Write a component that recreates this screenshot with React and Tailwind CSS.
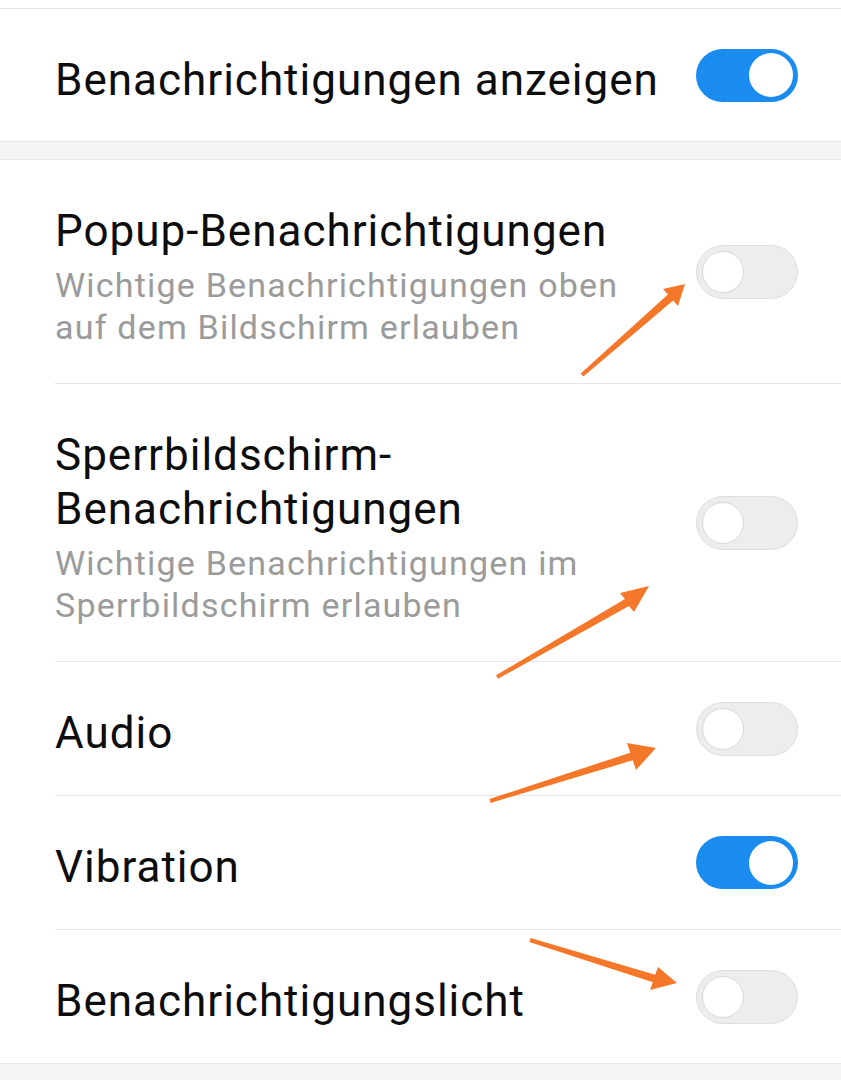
import React from 'react'

const arrows = [
  { tail: [582, 375], tip: [685, 284], wings: [[663, 289], [678, 306]] },
  { tail: [497, 677], tip: [649, 586], wings: [[620, 593], [634, 612]] },
  { tail: [490, 801], tip: [656, 748], wings: [[627, 743], [636, 770]] },
  { tail: [530, 940], tip: [677, 983], wings: [[658, 967], [650, 990]] },
]

function Arrow({ tail, tip, wings }) {
  const base = [(wings[0][0] + wings[1][0]) / 2, (wings[0][1] + wings[1][1]) / 2]
  const dx = base[0] - tail[0]
  const dy = base[1] - tail[1]
  const len = Math.hypot(dx, dy)
  const px = -dy / len
  const py = dx / len
  // figure out which wing sits on the +perp side
  const side = (w) => px * (w[0] - base[0]) + py * (w[1] - base[1])
  const wPos = side(wings[0]) > 0 ? wings[0] : wings[1]
  const wNeg = side(wings[0]) > 0 ? wings[1] : wings[0]
  const poly = [
    [tail[0] + px * 2, tail[1] + py * 2],
    [base[0] + px * 4, base[1] + py * 4],
    wPos,
    tip,
    wNeg,
    [base[0] - px * 4, base[1] - py * 4],
    [tail[0] - px * 2, tail[1] - py * 2],
  ]
  return <polygon points={poly.map((p) => p.join(',')).join(' ')} fill="#f5782a" strokeLinejoin="round" />
}

function Toggle({ on }) {
  if (on) {
    return (
      <div className="w-[102px] h-[53px] rounded-full bg-[#1a8cf0] flex items-center justify-end pr-[5px] shrink-0">
        <div className="w-[44px] h-[44px] rounded-full bg-white" />
      </div>
    )
  }
  return (
    <div className="w-[102px] h-[54px] rounded-full bg-[#ededed] border border-[#dedede] flex items-center pl-[5px] shrink-0">
      <div className="w-[42px] h-[42px] rounded-full bg-white border border-[#d8d8d8]" />
    </div>
  )
}

function Row({ title, sub, on, last }) {
  return (
    <div className="pl-[55px]">
      <div className={`flex items-center justify-between pr-[43px] ${last ? '' : 'border-b border-[#e6e6e6]'}`}>
        <div className="pt-[44px] pb-[35px] pr-4">
          <div className="text-[44px] leading-[54px] tracking-[1px] text-[#0d0d0d]">{title}</div>
          {sub && <div className="mt-[6px] text-[34px] leading-[42px] tracking-[1.2px] text-[#9b9b9b]">{sub}</div>}
        </div>
        <Toggle on={on} />
      </div>
    </div>
  )
}

export default function App() {
  return (
    <div className="relative w-[841px] h-[1080px] overflow-hidden bg-white" style={{ fontFamily: 'Roboto, "Noto Sans", sans-serif' }}>
      <div className="h-[8px] bg-white" />
      <div className="border-t border-[#e3e3e3]">
        <div className="pl-[55px] pr-[43px] flex items-center justify-between h-[132px]">
          <div className="text-[44px] leading-[54px] tracking-[1px] text-[#0d0d0d] pt-[9px]">Benachrichtigungen anzeigen</div>
          <Toggle on />
        </div>
      </div>
      <div className="h-[19px] bg-[#f5f5f5] border-y border-[#e8e8e8]" />
      <Row
        title="Popup-Benachrichtigungen"
        sub={<>Wichtige Benachrichtigungen oben<br />auf dem Bildschirm erlauben</>}
      />
      <Row
        title={<>Sperrbildschirm-<br />Benachrichtigungen</>}
        sub={<>Wichtige Benachrichtigungen im<br />Sperrbildschirm erlauben</>}
      />
      <Row title="Audio" />
      <Row title="Vibration" on />
      <Row title="Benachrichtigungslicht" last />
      <div className="h-[20px] bg-[#f5f5f5] border-t border-[#e8e8e8]" />

      <svg className="absolute inset-0 pointer-events-none" width="841" height="1080" viewBox="0 0 841 1080">
        {arrows.map((a, i) => (
          <Arrow key={i} {...a} />
        ))}
      </svg>
    </div>
  )
}
